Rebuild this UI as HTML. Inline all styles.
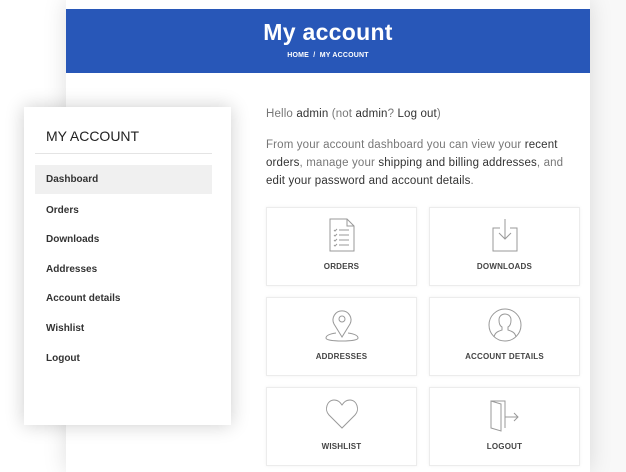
<!DOCTYPE html>
<html><head><style>
*{margin:0;padding:0;box-sizing:border-box}
body{width:626px;height:472px;overflow:hidden;background:#fff;font-family:"Liberation Sans",sans-serif;position:relative}
.page{position:absolute;left:66px;top:0;width:524px;height:472px;background:#fff;box-shadow:0 0 22px rgba(0,0,0,.13)}
.rstrip{position:absolute;left:590px;top:0;width:36px;height:472px;background:#f8f8f8}
.hdr{position:absolute;left:66px;top:9px;width:524px;height:64px;background:#2857b8;color:#fff;text-align:center}
.hdr h1{font-weight:bold;font-size:23px;margin-top:10px;letter-spacing:.3px}
.hdr .bc{font-size:7px;font-weight:bold;margin-top:6px;letter-spacing:.2px}
.txt{position:absolute;left:266px;font-size:11.5px;color:#777;line-height:18px;letter-spacing:.15px}
.txt b{font-weight:normal;color:#333}
.card{position:absolute;width:151px;height:79px;background:#fff;border:1px solid #ececec;box-shadow:0 0 3px rgba(0,0,0,.06);text-align:center}
.card span{position:absolute;left:0;right:0;top:54px;font-size:8px;font-weight:bold;color:#444;letter-spacing:.2px}
.card svg{position:absolute;left:50%;top:10px;transform:translateX(-50%)}
.side{position:absolute;left:24px;top:107px;width:207px;height:318px;background:#fff;box-shadow:0 0 18px rgba(0,0,0,.2)}
.side h2{position:absolute;left:22px;top:21px;font-size:14px;font-weight:normal;color:#222}
.side .ln{position:absolute;left:11px;top:46px;width:177px;border-top:1px solid #e4e4e4}
.side .it{position:absolute;left:11px;width:177px;height:29px;padding-left:11px;line-height:29px;font-size:10px;font-weight:bold;color:#333}
.side .act{background:#f0f0f0}
</style></head><body>
<div class="rstrip"></div>
<div class="page"></div>
<div class="hdr"><h1>My account</h1><div class="bc">HOME &nbsp;/&nbsp; MY ACCOUNT</div></div>
<div class="txt" style="top:105px">Hello <b>admin</b> (not <b>admin</b>? <b>Log out</b>)</div>
<div class="txt" style="top:136px;width:330px">From your account dashboard you can view your <b>recent</b><br><b>orders</b>, manage your <b>shipping and billing addresses</b>, and<br><b>edit your password and account details</b>.</div>

<div class="card" style="left:266px;top:207px"><svg width="26" height="34" viewBox="0 0 26 34" fill="none" stroke="#999" stroke-width="1"><path d="M1 1h17l7 7v25H1z M18 1v7h7"/><path d="M5 12l1 1 2-2M10 12h10M5 17l1 1 2-2M10 17h10M5 22l1 1 2-2M10 22h10M5 27l1 1 2-2M10 27h10"/></svg><span>ORDERS</span></div>
<div class="card" style="left:429px;top:207px"><svg width="26" height="34" viewBox="0 0 26 34" fill="none" stroke="#999" stroke-width="1"><path d="M8 10H1v23h24V10h-7M13 1v20M7 15l6 6 6-6"/></svg><span>DOWNLOADS</span></div>
<div class="card" style="left:266px;top:297px"><svg width="36" height="34" viewBox="0 0 36 34" fill="none" stroke="#999" stroke-width="1"><path d="M18 29L10 16a9 9 0 1 1 16 0z"/><circle cx="18" cy="11" r="3"/><path d="M12 25C5 26 2 28 2 30c0 2 7 3 16 3s16-1 16-3c0-2-3-4-10-5"/></svg><span>ADDRESSES</span></div>
<div class="card" style="left:429px;top:297px"><svg width="34" height="34" viewBox="0 0 34 34" fill="none" stroke="#999" stroke-width="1"><circle cx="17" cy="17" r="16"/><path d="M6 29c1-5 5-6 8-7v-3c-2-1-3-4-3-7 0-4 3-6 6-6s6 2 6 6c0 3-1 6-3 7v3c3 1 7 2 8 7"/></svg><span>ACCOUNT DETAILS</span></div>
<div class="card" style="left:266px;top:387px"><svg width="34" height="32" viewBox="0 0 34 32" fill="none" stroke="#999" stroke-width="1"><path d="M17 30L4 17C-1 12 2 2 9 2c4 0 6 2 8 5 2-3 4-5 8-5 7 0 10 10 5 15z"/></svg><span>WISHLIST</span></div>
<div class="card" style="left:429px;top:387px"><svg width="32" height="34" viewBox="0 0 32 34" fill="none" stroke="#999" stroke-width="1"><path d="M2 3h14v27M2 3l10 3v27L2 30zM16 19h13M25 15l4 4-4 4"/></svg><span>LOGOUT</span></div>

<div class="side">
<h2>MY ACCOUNT</h2><div class="ln"></div>
<div class="it act" style="top:58px">Dashboard</div>
<div class="it" style="top:89px">Orders</div>
<div class="it" style="top:118px">Downloads</div>
<div class="it" style="top:148px">Addresses</div>
<div class="it" style="top:177px">Account details</div>
<div class="it" style="top:207px">Wishlist</div>
<div class="it" style="top:237px">Logout</div>
</div>
</body></html>
